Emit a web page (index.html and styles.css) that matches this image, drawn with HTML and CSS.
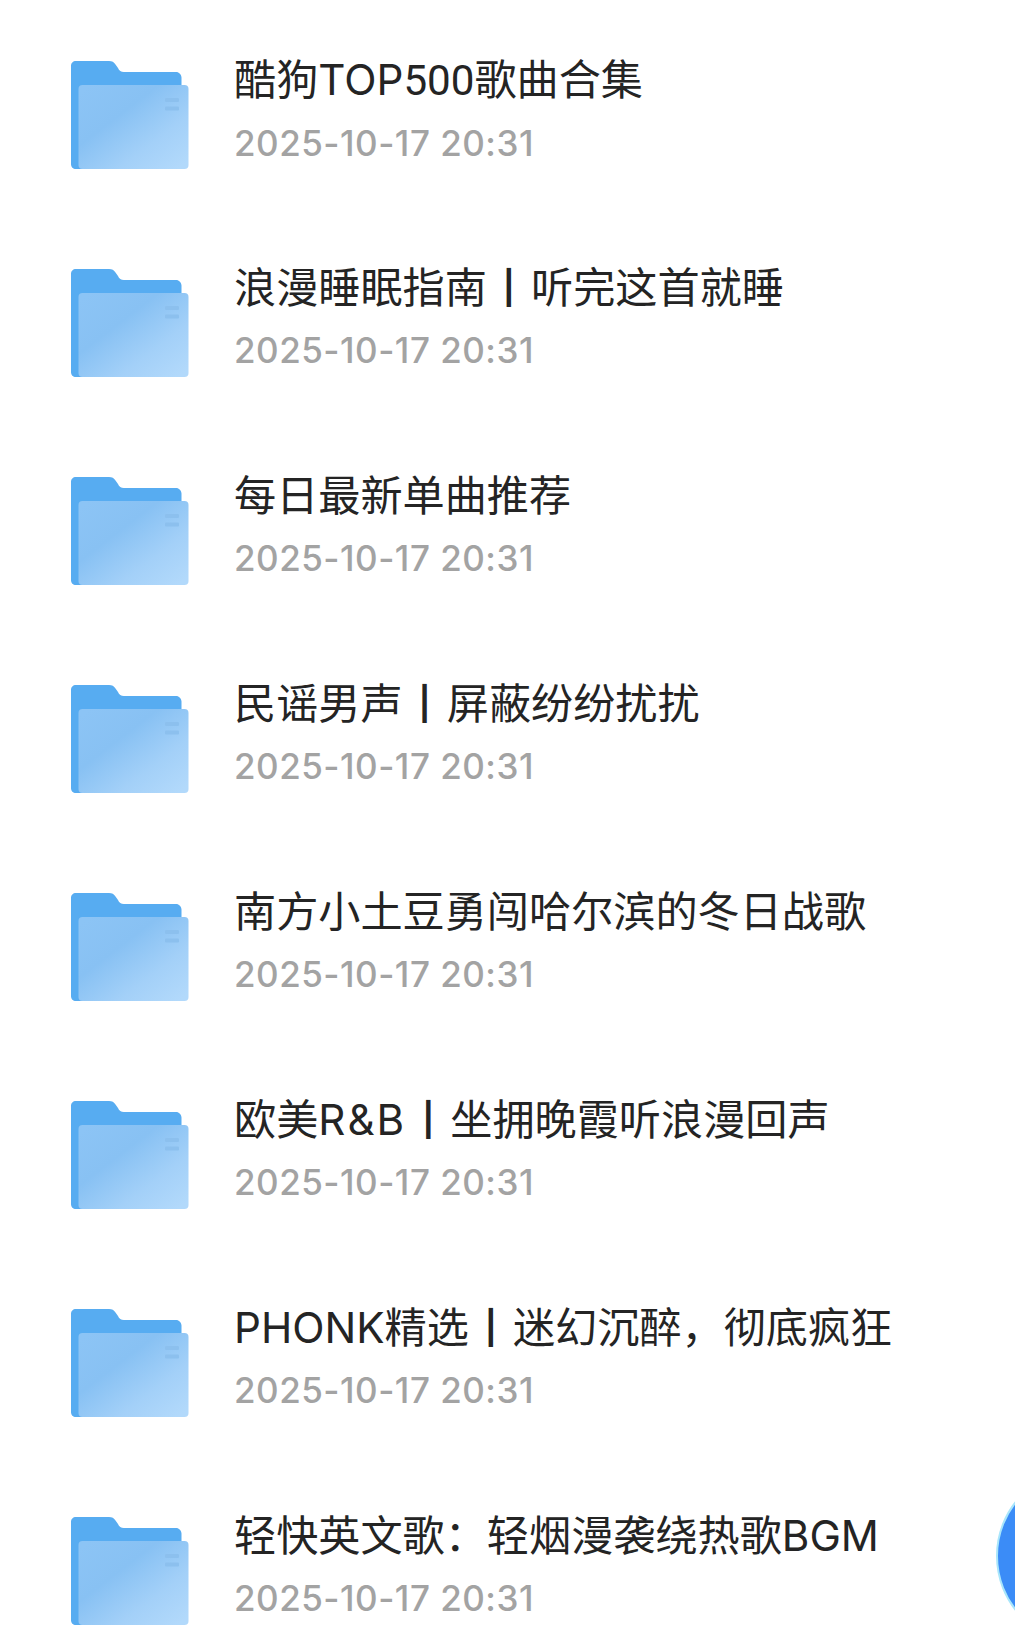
FILE: index.html

```html
<!DOCTYPE html>
<html lang="zh-CN">
<head>
  <meta charset="UTF-8" />
  <title>Folders</title>
  <meta name="viewport" content="width=device-width, initial-scale=1.0" />
  <link rel="stylesheet" href="styles.css">
</head>
<body>

  <!-- Shared folder icon -->
  <svg class="defs" width="0" height="0" aria-hidden="true">
    <defs>
      <linearGradient id="frontFill" x1="0.05" y1="0.05" x2="0.95" y2="0.95">
        <stop offset="0" stop-color="#8cc4f5" />
        <stop offset="0.35" stop-color="#88c1f3" />
        <stop offset="0.7" stop-color="#a3d0f8" />
        <stop offset="1" stop-color="#b2d9fb" />
      </linearGradient>
      <symbol id="folder" viewBox="0 0 118 108">
        <path d="M5 0H38C41 0 43 1 44.500 3.500L47 7C48 9.500 50 11 53 11H105C108 11 110.500 13.500 110.500 16.500V108H5C2 108 0 106 0 103V5C0 2 2 0 5 0Z" fill="#57acf1" />
        <rect x="7.500" y="24" width="110" height="84" rx="4" fill="url(#frontFill)" />
        <rect x="94" y="37" width="14" height="4" rx="1" fill="#8cc0ee" />
        <rect x="94" y="45.500" width="14" height="4" rx="1" fill="#8cc0ee" />
      </symbol>
    </defs>
  </svg>

  <ul class="file-list">
    <li class="file-row">
      <svg class="folder-icon"><use href="#folder" /></svg>
      <div class="file-info">
        <div class="file-name">酷狗TOP<span class="num">500</span>歌曲合集</div>
        <div class="file-date">2025-10-17 20:31</div>
      </div>
    </li>
    <li class="file-row">
      <svg class="folder-icon"><use href="#folder" /></svg>
      <div class="file-info">
        <div class="file-name">浪漫睡眠指南<span class="sep">丨</span>听完这首就睡</div>
        <div class="file-date">2025-10-17 20:31</div>
      </div>
    </li>
    <li class="file-row">
      <svg class="folder-icon"><use href="#folder" /></svg>
      <div class="file-info">
        <div class="file-name">每日最新单曲推荐</div>
        <div class="file-date">2025-10-17 20:31</div>
      </div>
    </li>
    <li class="file-row">
      <svg class="folder-icon"><use href="#folder" /></svg>
      <div class="file-info">
        <div class="file-name">民谣男声<span class="sep">丨</span>屏蔽纷纷扰扰</div>
        <div class="file-date">2025-10-17 20:31</div>
      </div>
    </li>
    <li class="file-row">
      <svg class="folder-icon"><use href="#folder" /></svg>
      <div class="file-info">
        <div class="file-name">南方小土豆勇闯哈尔滨的冬日战歌</div>
        <div class="file-date">2025-10-17 20:31</div>
      </div>
    </li>
    <li class="file-row">
      <svg class="folder-icon"><use href="#folder" /></svg>
      <div class="file-info">
        <div class="file-name">欧美<span class="latin-wide">R&amp;B</span><span class="sep">丨</span>坐拥晚霞听浪漫回声</div>
        <div class="file-date">2025-10-17 20:31</div>
      </div>
    </li>
    <li class="file-row">
      <svg class="folder-icon"><use href="#folder" /></svg>
      <div class="file-info">
        <div class="file-name">PHONK精选<span class="sep">丨</span>迷幻沉醉，彻底疯狂</div>
        <div class="file-date">2025-10-17 20:31</div>
      </div>
    </li>
    <li class="file-row">
      <svg class="folder-icon"><use href="#folder" /></svg>
      <div class="file-info">
        <div class="file-name">轻快英文歌：轻烟漫袭绕热歌BGM</div>
        <div class="file-date">2025-10-17 20:31</div>
      </div>
    </li>
  </ul>

  <!-- Floating button, only its left edge shows -->
  <svg class="float-btn" viewBox="0 0 20 116">
    <circle cx="89" cy="58" r="87" fill="#3b8cf7" stroke="#a9e6fb" stroke-width="2" />
  </svg>

</body>
</html>
```

FILE: styles.css

```css
* {
  box-sizing: border-box;
}

html,
body {
  height: 100%;
}

body {
  background-color: #fff;
  margin: 0;
  overflow: hidden;
  position: relative;
  font-family: "Inter", "Noto Sans CJK SC", sans-serif;
}

.defs {
  position: absolute;
}

.file-list {
  list-style: none;
  margin: 0;
  padding: 61px 0 0 71px;
}

.file-row {
  display: flex;
  align-items: flex-start;
  gap: 45px;
  height: 208px;
}

.folder-icon {
  width: 118px;
  height: 108px;
  flex-shrink: 0;
}

.file-info {
  margin-top: -7px;
}

.file-name {
  font-size: 42.15px;
  line-height: 52px;
  color: #242424;
  white-space: nowrap;
}

.num {
  font-family: "Roboto", sans-serif;
}

.latin-wide {
  letter-spacing: 2px;
}

.sep {
  font-weight: 500;
  margin: 0 1px;
}

.file-date {
  font-size: 35px;
  font-weight: 500;
  letter-spacing: 0.5px;
  line-height: 42px;
  margin-top: 15px;
  color: #a3a3a3;
}

.float-btn {
  position: absolute;
  right: 0;
  top: 1498px;
  width: 20px;
  height: 116px;
}
```
